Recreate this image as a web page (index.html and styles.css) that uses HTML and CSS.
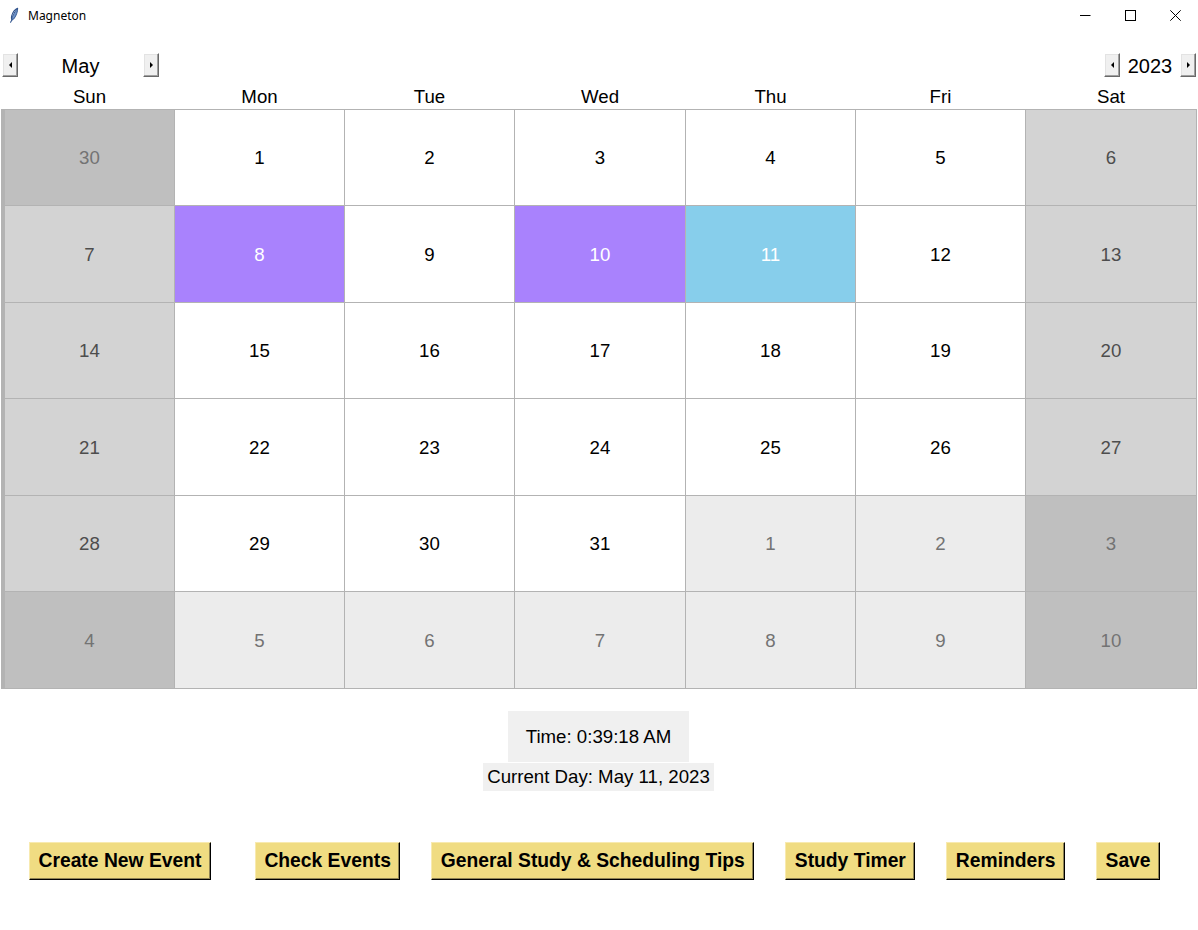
FILE: index.html
```html
<!DOCTYPE html>
<html lang="en">
<head>
<meta charset="utf-8">
<title>Magneton</title>
<link rel="stylesheet" href="styles.css">
</head>
<body>
<div class="titlebar">
  <div class="title">
    <svg class="feather" width="10" height="16" viewBox="0 0 10 16">
      <path d="M8.6 1.2 C6.2 2.2 3.6 5.4 2.6 9.2 C2.2 10.8 2.4 12.2 2.9 12.9 L1.6 15.2" fill="none" stroke="#2b4f8a" stroke-width="1.1" stroke-linecap="round"/>
      <path d="M8.6 1.2 C8.9 4.2 7.2 8.8 5.2 11.4 C4.4 12.4 3.5 13 2.9 12.9 C2.7 10.4 4.6 6 8.6 1.2 Z" fill="#6f93c8" stroke="#2b4f8a" stroke-width="0.9"/>
    </svg>
    <span>Magneton</span>
  </div>
  <div class="controls">
    <span class="ctl"><svg width="11" height="11" viewBox="0 0 11 11"><path d="M0 5.5 H10.5" stroke="#000" stroke-width="1"/></svg></span>
    <span class="ctl"><svg width="11" height="11" viewBox="0 0 11 11"><rect x="0.5" y="0.5" width="10" height="10" fill="none" stroke="#000" stroke-width="1"/></svg></span>
    <span class="ctl"><svg width="11" height="11" viewBox="0 0 11 11"><path d="M0.3 0.3 L10.7 10.7 M10.7 0.3 L0.3 10.7" stroke="#000" stroke-width="1"/></svg></span>
  </div>
</div>

<div class="app">
  <div class="nav">
    <div class="navgroup">
      <button class="arrow"><span class="tri tri-left"></span></button>
      <span class="month">May</span>
      <button class="arrow"><span class="tri tri-right"></span></button>
    </div>
    <div class="navgroup">
      <button class="arrow"><span class="tri tri-left"></span></button>
      <span class="year">2023</span>
      <button class="arrow"><span class="tri tri-right"></span></button>
    </div>
  </div>

  <div class="weekdays">
    <div>Sun</div><div>Mon</div><div>Tue</div><div>Wed</div><div>Thu</div><div>Fri</div><div>Sat</div>
  </div>

  <div class="grid">
    <div class="cell om-we">30</div>
    <div class="cell">1</div>
    <div class="cell">2</div>
    <div class="cell">3</div>
    <div class="cell">4</div>
    <div class="cell">5</div>
    <div class="cell we">6</div>

    <div class="cell we">7</div>
    <div class="cell event">8</div>
    <div class="cell">9</div>
    <div class="cell event">10</div>
    <div class="cell today">11</div>
    <div class="cell">12</div>
    <div class="cell we">13</div>

    <div class="cell we">14</div>
    <div class="cell">15</div>
    <div class="cell">16</div>
    <div class="cell">17</div>
    <div class="cell">18</div>
    <div class="cell">19</div>
    <div class="cell we">20</div>

    <div class="cell we">21</div>
    <div class="cell">22</div>
    <div class="cell">23</div>
    <div class="cell">24</div>
    <div class="cell">25</div>
    <div class="cell">26</div>
    <div class="cell we">27</div>

    <div class="cell we">28</div>
    <div class="cell">29</div>
    <div class="cell">30</div>
    <div class="cell">31</div>
    <div class="cell om">1</div>
    <div class="cell om">2</div>
    <div class="cell om-we">3</div>

    <div class="cell om-we">4</div>
    <div class="cell om">5</div>
    <div class="cell om">6</div>
    <div class="cell om">7</div>
    <div class="cell om">8</div>
    <div class="cell om">9</div>
    <div class="cell om-we">10</div>
  </div>

  <div class="info">
    <div class="time">Time: 0:39:18 AM</div>
    <div class="day">Current Day: May 11, 2023</div>
  </div>

  <div class="actions">
    <button class="btn first">Create New Event</button>
    <button class="btn">Check Events</button>
    <button class="btn">General Study &amp; Scheduling Tips</button>
    <button class="btn">Study Timer</button>
    <button class="btn">Reminders</button>
    <button class="btn">Save</button>
  </div>
</div>
</body>
</html>
```

FILE: styles.css
```css
* { box-sizing: border-box; }

html, body {
  margin: 0;
  padding: 0;
  background: #ffffff;
  width: 1198px;
  height: 930px;
  overflow: hidden;
  font-family: "Liberation Sans", Arial, sans-serif;
  color: #000;
}

/* ---------- title bar ---------- */
.titlebar {
  height: 30px;
  display: flex;
  align-items: center;
  justify-content: space-between;
  background: #ffffff;
}
.title {
  display: flex;
  align-items: center;
  padding-left: 9px;
  font-size: 12px;
  font-family: "Noto Sans", "Liberation Sans", sans-serif;
}
.title span { margin-left: 9px; }
.feather { display: block; }
.controls { display: flex; height: 30px; }
.ctl {
  width: 45px;
  height: 30px;
  display: flex;
  align-items: center;
  justify-content: center;
}
.ctl svg { display: block; }

/* ---------- nav ---------- */
.app { padding-top: 23px; }

.nav {
  display: flex;
  justify-content: space-between;
  align-items: center;
  padding: 0 2px;
  height: 24px;
}
.navgroup { display: flex; align-items: center; }

.arrow {
  width: 16px;
  height: 24px;
  padding: 0;
  margin: 0;
  background: #f0f0f0;
  border: 1px solid;
  border-color: #ffffff #696969 #696969 #ffffff;
  box-shadow: inset -1px -1px 0 #a0a0a0, inset 1px 1px 0 #e3e3e3;
  display: flex;
  align-items: center;
  justify-content: center;
}
.tri {
  display: block;
  width: 0;
  height: 0;
  border-top: 3px solid transparent;
  border-bottom: 3px solid transparent;
}
.tri-left { border-right: 3px solid #000; }
.tri-right { border-left: 3px solid #000; }

.month {
  width: 125px;
  text-align: center;
  font-size: 20px;
  line-height: 24px;
  padding-top: 2px;
}
.year {
  width: 60px;
  text-align: center;
  font-size: 20px;
  line-height: 24px;
  padding-top: 2px;
}

/* ---------- weekday header ---------- */
.weekdays {
  display: grid;
  grid-template-columns: 169px 169px 169px 170px 169px 169px 170px;
  column-gap: 1px;
  margin-top: 9px;
  margin-left: 1px;
  padding-left: 4px;
  height: 23px;
  font-size: 18.67px;
  line-height: 21px;
  text-align: center;
}

/* ---------- calendar grid ---------- */
.grid {
  display: grid;
  width: fit-content;
  grid-template-columns: 169px 169px 169px 170px 169px 169px 170px;
  grid-template-rows: 95px 96px 95px 96px 95px 96px;
  gap: 1px;
  margin-left: 1px;
  padding: 1px 1px 1px 4px;
  background: #b3b3b3;
}
.cell {
  display: flex;
  align-items: center;
  justify-content: center;
  padding-top: 1px;
  background: #ffffff;
  color: #000;
  font-size: 18.67px;
}
.cell.we { background: #d3d3d3; color: #4d4d4d; }
.cell.om { background: #ececec; color: #737373; }
.cell.om-we { background: #bfbfbf; color: #737373; }
.cell.event { background: #a982fd; color: #ffffff; }
.cell.today { background: #87ceeb; color: #ffffff; }

/* ---------- info ---------- */
.info {
  display: flex;
  flex-direction: column;
  align-items: center;
  margin-top: 22px;
  padding-right: 1px;
}
.time {
  background: #f0f0f0;
  font-size: 18.67px;
  line-height: 21px;
  padding: 15px 18px;
}
.day {
  margin-top: 1px;
  background: #f0f0f0;
  font-size: 18.67px;
  line-height: 22px;
  padding: 3px 4px;
}

/* ---------- action buttons ---------- */
.actions {
  display: flex;
  align-items: center;
  gap: 31px;
  margin-top: 51px;
  padding-left: 29px;
}
.btn {
  height: 38px;
  margin: 0;
  padding: 0 8.5px;
  background: #f0dc82;
  color: #000;
  font-family: "Liberation Sans", Arial, sans-serif;
  font-weight: bold;
  font-size: 19.3px;
  line-height: 22px;
  border: 1px solid;
  border-color: #f8eab0 #000000 #000000 #f8eab0;
  box-shadow: inset -1px -1px 0 #8f8455;
  white-space: nowrap;
}
.btn.first { margin-right: 13px; }
```
